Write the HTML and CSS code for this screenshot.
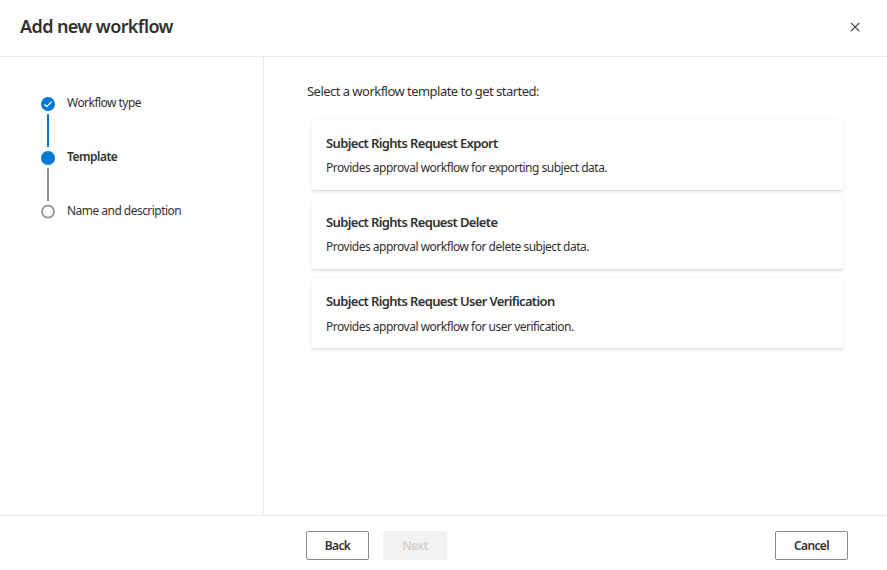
FILE: index.html
```html
<!DOCTYPE html>
<html lang="en">
<head>
<meta charset="utf-8">
<title>Add new workflow</title>
<link rel="stylesheet" href="styles.css">
</head>
<body>
<div class="dialog">
  <header class="header">
    <h1 class="title">Add new workflow</h1>
    <button class="close" aria-label="Close"><svg width="10" height="10" viewBox="0 0 10 10"><path d="M1 .8l8.4 8.4M9.4.8L1 9.2" stroke="#323130" stroke-width="1.1" fill="none"/></svg></button>
  </header>
  <div class="body">
    <nav class="steps">
      <div class="step">
        <svg class="dot" width="14" height="14" viewBox="0 0 14 14"><circle cx="7" cy="7" r="7" fill="#0078d4"/><path d="M3.3 7.2l2.4 2.4 5-5" stroke="#fff" stroke-width="1.3" fill="none"/></svg>
        <span class="step-label">Workflow type</span>
      </div>
      <div class="line line-done"></div>
      <div class="step">
        <svg class="dot" width="14" height="14" viewBox="0 0 14 14"><circle cx="7" cy="7" r="7" fill="#0078d4"/></svg>
        <span class="step-label current">Template</span>
      </div>
      <div class="line"></div>
      <div class="step">
        <svg class="dot" width="14" height="14" viewBox="0 0 14 14"><circle cx="7" cy="6.6" r="6" fill="#fff" stroke="#979593" stroke-width="1.8"/></svg>
        <span class="step-label">Name and description</span>
      </div>
    </nav>
    <main class="content">
      <p class="intro">Select a workflow template to get started:</p>
      <div class="cards">
        <section class="card"><h2 class="card-title">Subject Rights Request Export</h2><p class="card-text">Provides approval workflow for exporting subject data.</p></section>
        <section class="card"><h2 class="card-title">Subject Rights Request Delete</h2><p class="card-text">Provides approval workflow for delete subject data.</p></section>
        <section class="card card-tall"><h2 class="card-title">Subject Rights Request User Verification</h2><p class="card-text">Provides approval workflow for user verification.</p></section>
      </div>
    </main>
  </div>
  <footer class="footer">
    <button class="btn back">Back</button>
    <button class="btn next" disabled>Next</button>
    <button class="btn cancel">Cancel</button>
  </footer>
</div>
</body>
</html>
```
FILE: styles.css
```css
* { box-sizing: border-box; }
body {
  margin: 0;
  background: #fff;
  color: #323130;
  font-family: "Noto Sans", "Open Sans", sans-serif;
}
h1, h2, p { margin: 0; white-space: nowrap; }
.dialog { height: 570px; display: flex; flex-direction: column; overflow: hidden; }
.header {
  height: 57px;
  flex: none;
  display: flex;
  align-items: center;
  justify-content: space-between;
  padding: 0 27px 3px 20px;
  border-bottom: 1px solid #eaeaea;
}
.title { margin-top: -1px; font-size: 18px; line-height: 24px; font-weight: 600; letter-spacing: -0.6px; }
.close { display: flex; padding: 0; border: 0; background: none; }
.body { flex: 1; display: flex; min-height: 0; }
.steps { width: 264px; border-right: 1px solid #eaeaea; padding: 40px 0 0 41px; }
.step { display: flex; align-items: center; height: 14px; }
.dot { flex: none; overflow: visible; }
.step-label {
  margin: -2px 0 0 12px;
  font-size: 12px;
  line-height: 14px;
  letter-spacing: -0.53px;
  white-space: nowrap;
}
.current { font-weight: 600; letter-spacing: -0.5px; }
.line { width: 2px; height: 33px; margin: 3px 0 4px 6px; background: #979593; }
.line-done { background: #0078d4; }
.content { flex: 1; padding: 24px 44px 0 43px; }
.intro { font-size: 13px; line-height: 20px; letter-spacing: -0.53px; }
.cards { display: flex; flex-direction: column; gap: 9px; margin: 19px 0 0 5px; }
.card {
  height: 70px;
  padding: 13px 14px 0;
  border-radius: 2px;
  background: #fff;
  box-shadow: 0 1.6px 3.6px rgba(0, 0, 0, .11), 0 .3px .9px rgba(0, 0, 0, .04);
}
.card-title { font-size: 13px; line-height: 20px; font-weight: 600; letter-spacing: -0.64px; }
.card-text { margin-top: 6px; font-size: 12px; line-height: 18px; letter-spacing: -0.49px; }
.card-tall .card-text { margin-top: 7px; }
.footer {
  height: 55px;
  flex: none;
  display: flex;
  padding: 15px 39px 0 306px;
  border-top: 1px solid #eaeaea;
}
.btn {
  height: 29px;
  padding: 0;
  border: 1px solid #8a8886;
  border-radius: 2px;
  background: #fff;
  color: #323130;
  font: 600 12px/18px "Noto Sans", "Open Sans", sans-serif;
  letter-spacing: -0.6px;
}
.back { width: 63px; }
.next { width: 64px; margin-left: 14px; border-color: #f3f2f1; background: #f3f2f1; color: #d2d0ce; }
.cancel { width: 73px; margin-left: auto; }
```
